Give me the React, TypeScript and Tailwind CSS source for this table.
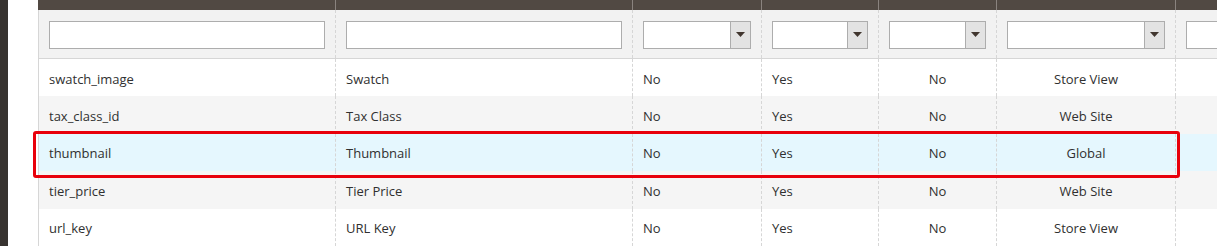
import React from "react";

type Col = { w: string; align: "left" | "center"; filter: "input" | "select" };

const cols: Col[] = [
  { w: "w-[297px]", align: "left", filter: "input" },
  { w: "w-[297px]", align: "left", filter: "input" },
  { w: "w-[129px]", align: "left", filter: "select" },
  { w: "w-[117px]", align: "left", filter: "select" },
  { w: "w-[118px]", align: "center", filter: "select" },
  { w: "w-[179px]", align: "center", filter: "select" },
  { w: "w-[120px]", align: "left", filter: "input" },
];

const rows = [
  ["swatch_image", "Swatch", "No", "Yes", "No", "Store View", ""],
  ["tax_class_id", "Tax Class", "No", "Yes", "No", "Web Site", ""],
  ["thumbnail", "Thumbnail", "No", "Yes", "No", "Global", ""],
  ["tier_price", "Tier Price", "No", "Yes", "No", "Web Site", ""],
  ["url_key", "URL Key", "No", "Yes", "No", "Store View", ""],
];

const rowBg = ["bg-white", "bg-[#f5f5f5]", "bg-[#e5f7fe]", "bg-[#f5f5f5]", "bg-white"];

const SelectBox = () => (
  <div className="flex h-[28px] w-full border border-[#adadad] bg-white">
    <div className="flex-1" />
    <div className="flex w-[20px] items-center justify-center border-l border-[#adadad] bg-[#e3e3e3]">
      <svg width="9" height="5" viewBox="0 0 9 5">
        <path d="M0 0h9L4.5 5z" fill="#41362f" />
      </svg>
    </div>
  </div>
);

export default function App() {
  return (
    <div className="relative flex h-[246px] w-[1217px] overflow-hidden bg-white font-['Open_Sans',sans-serif] text-[13px] text-[#303030]">
      <div className="h-full w-[8px] shrink-0 bg-[#373330]" />
      <div className="w-[30px] shrink-0" />
      <div className="flex shrink-0 flex-col">
        {/* header, scrolled mostly out of view */}
        <div className="flex h-[10px] bg-[#514943]">
          {cols.map((c, i) => (
            <div
              key={i}
              className={`${c.w} shrink-0 ${i === 0 ? "border-l border-[#514943]" : "border-l border-[#8a837f]"}`}
            />
          ))}
        </div>
        {/* filters */}
        <div className="flex h-[50px] border-b border-[#d6d6d6] bg-[#f2f2f2]">
          {cols.map((c, i) => (
            <div
              key={i}
              className={`${c.w} shrink-0 px-[10px] pt-[11px] ${i === 0 ? "border-l border-[#d6d6d6]" : "border-l border-dashed border-[#d6d6d6]"}`}
            >
              {c.filter === "input" ? (
                <div className="h-[28px] w-full border border-[#adadad] bg-white" />
              ) : (
                <SelectBox />
              )}
            </div>
          ))}
        </div>
        {/* data rows */}
        {rows.map((r, ri) => (
          <div key={ri} className={`flex h-[38px] ${rowBg[ri]}`}>
            {cols.map((c, i) => (
              <div
                key={i}
                className={`${c.w} flex shrink-0 items-center px-[10px] pt-[3px] ${c.align === "center" ? "justify-center" : ""} ${i === 0 ? "border-l border-[#d6d6d6]" : "border-l border-dashed border-[#d6d6d6]"}`}
              >
                {r[i]}
              </div>
            ))}
          </div>
        ))}
      </div>
      {/* annotation */}
      <div className="absolute left-[33px] top-[131px] h-[47px] w-[1147px] rounded-[3px] border-[3px] border-[#e8000b]" />
    </div>
  );
}
